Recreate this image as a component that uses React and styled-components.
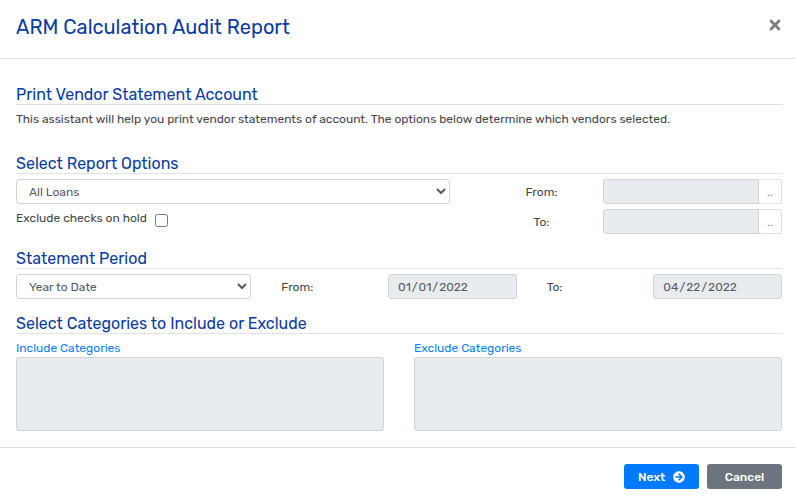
import React from "react";
import styled, { createGlobalStyle, css } from "styled-components";
import { FaArrowCircleRight, FaTimes } from "react-icons/fa";

const GlobalStyle = createGlobalStyle`
  *, *::before, *::after { box-sizing: border-box; }
  body {
    margin: 0;
    background: #fff;
    color: #46474a;
    font: 400 12px/18px Rubik, Inter, sans-serif;
  }
  button, input, select, textarea { font: inherit; margin: 0; }
`;

const Dialog = styled.form`
  display: flex;
  flex-direction: column;
`;

const Header = styled.header`
  display: flex;
  align-items: center;
  justify-content: space-between;
  padding: 12px 13px 16px 16px;
  border-bottom: 1px solid #dee2e6;
`;

const Title = styled.h1`
  margin: 0;
  font-size: 20px;
  line-height: 30px;
  font-weight: 400;
  color: #0b3ca0;
`;

const CloseButton = styled.button`
  display: flex;
  padding: 0 0 4px;
  border: 0;
  background: none;
  color: #7f7f7f;
  font-size: 16px;
`;

const Body = styled.main`
  display: flex;
  flex-direction: column;
  padding: 27px 14px 16px 16px;
`;

const Section = styled.section`
  margin-bottom: ${(p) => p.$space || 0}px;
`;

const SectionTitle = styled.h2`
  margin: 0 0 5px;
  border-bottom: 1px solid #dee2e6;
  font-size: 16px;
  line-height: 18px;
  font-weight: 400;
  color: #0b3ca0;
`;

const Text = styled.p`
  margin: 0;
`;

const Columns = styled.div`
  display: grid;
  grid-template-columns: ${(p) => p.$columns};
  column-gap: 30px;
`;

const Stack = styled.div`
  display: flex;
  flex-direction: column;
  gap: 5px;
`;

const Field = styled.div`
  display: grid;
  grid-template-columns: ${(p) => p.$columns};
  align-items: center;
`;

const Label = styled.label`
  text-align: ${(p) => (p.$centered ? "center" : "left")};
`;

const control = css`
  width: 100%;
  min-width: 0;
  height: 25px;
  border: 1px solid #ced4da;
  border-radius: 3px;
  color: #555c63;
`;

const Select = styled.select`
  ${control}
  padding: 0 0 0 8px;
  background: #fff;
`;

const Input = styled.input`
  ${control}
  padding: 0 8px;
  background: #e9ecef;
  &::-webkit-calendar-picker-indicator { display: none; }
`;

const Lookup = styled.div`
  display: flex;
  ${Input} {
    flex: 1;
    border-radius: 3px 0 0 3px;
  }
`;

const LookupButton = styled.button`
  flex: none;
  width: 23px;
  height: 25px;
  padding: 0;
  border: 1px solid #dee2e6;
  border-left: 0;
  border-radius: 0 3px 3px 0;
  background: #fff;
  color: #868e96;
`;

const CheckRow = styled.div`
  display: flex;
  align-items: flex-start;
  gap: 8px;
`;

const Checkbox = styled.input`
  && { margin-top: 5px; }
  width: 13px;
  height: 13px;
`;

const ListLink = styled.a`
  display: block;
  color: #0d80ff;
  text-decoration: none;
`;

const CategoryBox = styled.textarea`
  ${control}
  display: block;
  height: 74px;
  background: #e9ecef;
  resize: none;
`;

const Footer = styled.footer`
  display: flex;
  justify-content: flex-end;
  gap: 8px;
  padding: 16px 14px 11px;
  border-top: 1px solid #dee2e6;
`;

const Button = styled.button`
  display: flex;
  align-items: center;
  justify-content: center;
  gap: 8px;
  min-width: 75px;
  height: 25px;
  padding: 0 12px;
  border: 0;
  border-radius: 3px;
  background: ${(p) => (p.$primary ? "#007bff" : "#6c757d")};
  color: #fff;
  font-weight: 500;
`;

function LookupField({ id, label }) {
  return (
    <Field $columns="123fr 179fr">
      <Label htmlFor={id} $centered>{label}</Label>
      <Lookup>
        <Input id={id} type="text" disabled />
        <LookupButton type="button" aria-label={`Look up ${label}`}>..</LookupButton>
      </Lookup>
    </Field>
  );
}

function DateField({ id, label, value }) {
  return (
    <Field $columns="107fr 129fr">
      <Label htmlFor={id}>{label}</Label>
      <Input id={id} type="date" defaultValue={value} disabled />
    </Field>
  );
}

function CategoryList({ id, label }) {
  return (
    <div>
      <ListLink href="#" id={`${id}-label`}>{label}</ListLink>
      <CategoryBox id={id} aria-labelledby={`${id}-label`} disabled />
    </div>
  );
}

export default function App() {
  return (
    <>
      <GlobalStyle />
      <Dialog onSubmit={(e) => e.preventDefault()}>
        <Header>
          <Title>ARM Calculation Audit Report</Title>
          <CloseButton type="button" aria-label="Close"><FaTimes /></CloseButton>
        </Header>
        <Body>
          <Section $space={27}>
            <SectionTitle>Print Vendor Statement Account</SectionTitle>
            <Text>
              This assistant will help you print vendor statements of account. The options below
              determine which vendors selected.
            </Text>
          </Section>
          <Section $space={16}>
            <SectionTitle>Select Report Options</SectionTitle>
            <Columns $columns="434fr 302fr">
              <Stack>
                <Select aria-label="Report options"><option>All Loans</option></Select>
                <CheckRow>
                  <Label htmlFor="hold">Exclude checks on hold</Label>
                  <Checkbox id="hold" type="checkbox" />
                </CheckRow>
              </Stack>
              <Stack>
                <LookupField id="vendor-from" label="From:" />
                <LookupField id="vendor-to" label="To:" />
              </Stack>
            </Columns>
          </Section>
          <Section $space={16}>
            <SectionTitle>Statement Period</SectionTitle>
            <Columns $columns="repeat(3, 1fr)">
              <Select aria-label="Statement period"><option>Year to Date</option></Select>
              <DateField id="period-from" label="From:" value="2022-01-01" />
              <DateField id="period-to" label="To:" value="2022-04-22" />
            </Columns>
          </Section>
          <Section>
            <SectionTitle>Select Categories to Include or Exclude</SectionTitle>
            <Columns $columns="1fr 1fr">
              <CategoryList id="include" label="Include Categories" />
              <CategoryList id="exclude" label="Exclude Categories" />
            </Columns>
          </Section>
        </Body>
        <Footer>
          <Button type="submit" $primary>Next <FaArrowCircleRight size={12} aria-hidden="true" /></Button>
          <Button type="button">Cancel</Button>
        </Footer>
      </Dialog>
    </>
  );
}
